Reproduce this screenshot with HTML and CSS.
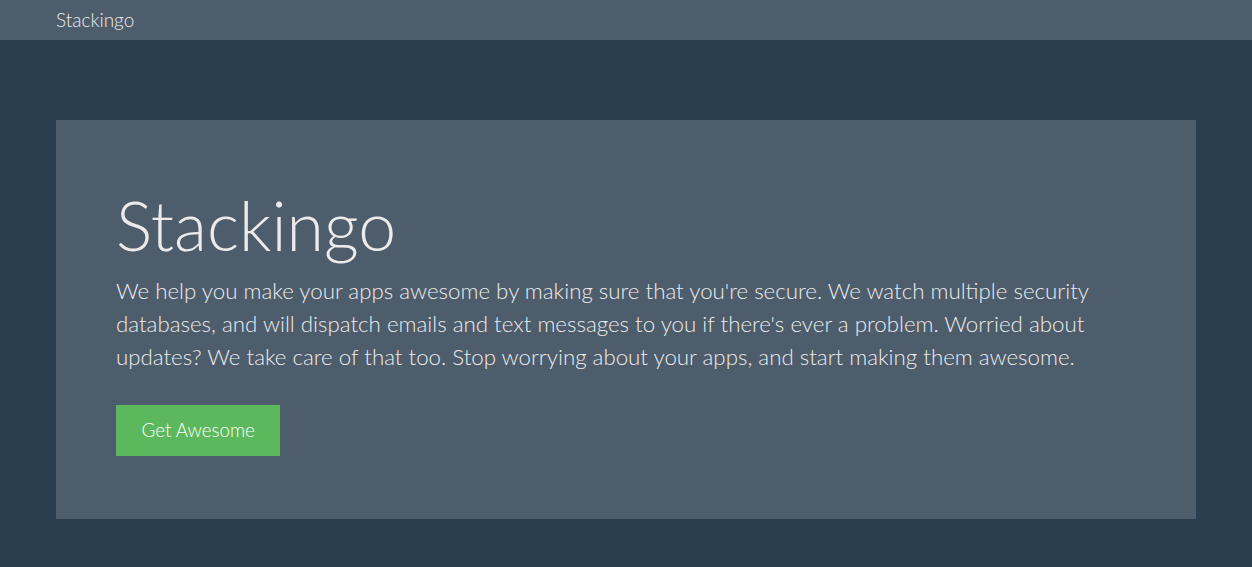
FILE: index.html
```html
<!DOCTYPE html>
<html lang="en">
<head>
<meta charset="utf-8">
<title>Stackingo</title>
<link rel="stylesheet" href="styles.css">
</head>
<body>
<nav class="navbar">
  <div class="navbar-inner">
    <a class="brand" href="#">Stackingo</a>
  </div>
</nav>
<main class="container">
  <section class="jumbotron">
    <h1 class="title">Stackingo</h1>
    <p class="lead">We help you make your apps awesome by making sure that you're secure. We watch multiple security databases, and will dispatch emails and text messages to you if there's ever a problem. Worried about updates? We take care of that too. Stop worrying about your apps, and start making them awesome.</p>
    <p class="actions"><a class="btn-success" href="#">Get Awesome</a></p>
  </section>
</main>
</body>
</html>
```
FILE: styles.css
```css
html, body {
  margin: 0;
  padding: 0;
}
body {
  background: #2b3e50;
  color: #ebebeb;
  font-family: Lato, "Open Sans", "Liberation Sans", sans-serif;
  font-weight: 300;
  font-size: 15px;
  line-height: 1.42857;
}
.navbar {
  background: #4e5d6c;
  height: 40px;
}
.navbar-inner {
  width: 1140px;
  margin: 0 auto;
  display: flex;
  align-items: center;
  height: 40px;
}
.brand {
  color: #ebebeb;
  text-decoration: none;
  font-size: 19px;
  font-weight: 300;
  line-height: 20px;
}
.container {
  width: 1140px;
  margin: 0 auto;
  padding-top: 80px;
}
.jumbotron {
  background: #4e5d6c;
  padding: 48px 60px 48px;
}
.title {
  margin: 20px 0 11px;
  font-size: 68px;
  font-weight: 300;
  line-height: 1.1;
  color: #ebebeb;
}
.lead {
  margin: 0 0 15px;
  font-size: 22.3px;
  line-height: 33px;
  font-weight: 300;
}
.actions {
  margin: 32px 0 15px;
  display: flex;
}
.btn-success {
  display: flex;
  align-items: center;
  height: 51px;
  box-sizing: border-box;
  padding: 0 25.5px;
  background: #5cb85c;
  color: #ffffff;
  text-decoration: none;
  font-size: 18.75px;
  font-weight: 300;
}
```
